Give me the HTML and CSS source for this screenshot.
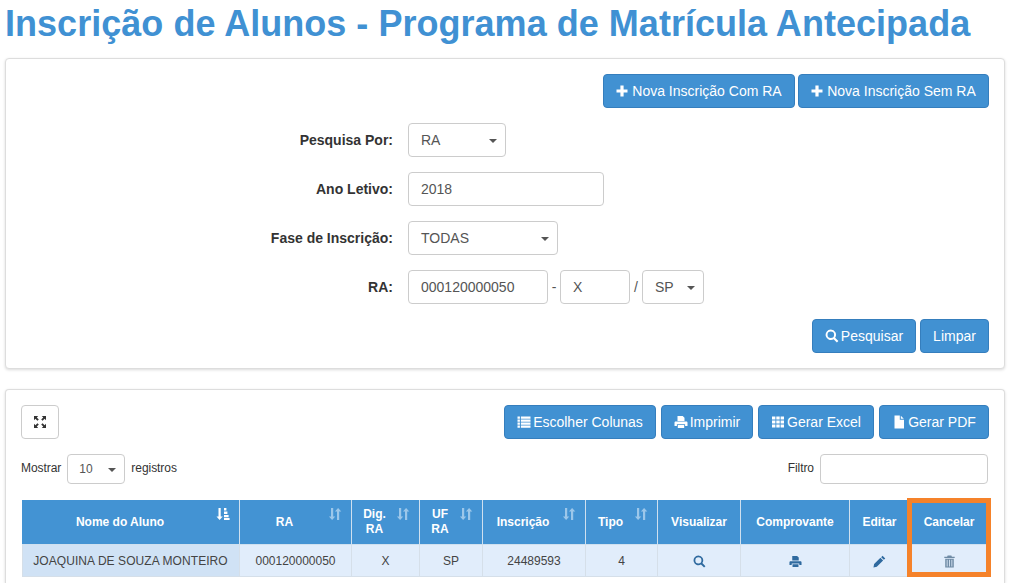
FILE: index.html
```html
<!DOCTYPE html>
<html lang="pt-BR">
  <head>
    <meta charset="UTF-8" />
    <title>Inscrição de Alunos</title>
    <link rel="stylesheet" href="styles.css">
  </head>
  <body>
    <svg class="sprite" xmlns="http://www.w3.org/2000/svg">
      <symbol id="i-plus" viewBox="0 0 12 12"><path d="M4.4 0.5h3.2v3.9h3.9v3.2H7.6v3.9H4.4V7.6H0.5V4.4h3.9z"/></symbol>
      <symbol id="i-search" viewBox="0 0 14 14"><path fill-rule="evenodd" d="M5.8 0.6a5.2 5.2 0 0 1 4.3 8.1l3.3 3.3-1.5 1.5-3.3-3.3A5.2 5.2 0 1 1 5.8 0.6zm0 1.900a3.300 3.300 0 1 0 0 6.600 3.300 3.300 0 0 0 0-6.600z"/></symbol>
      <symbol id="i-print" viewBox="0 0 14 14"><path fill-rule="evenodd" d="M3.5 1h5.2L10.5 2.8V6h-7zM1.6 6.6h10.8c.6 0 1.1.5 1.1 1.1v3.2h-2.4V9.2H2.9v1.7H.5V7.7c0-.6.5-1.1 1.1-1.1zM3.8 10h6.400v3H3.800z"/></symbol>
      <symbol id="i-list" viewBox="0 0 14 14"><path d="M.5 1.5h2.4v2.2H.5zm3.4 0h9.6v2.2H3.9zM.5 4.5h2.4v2.2H.5zm3.4 0h9.6v2.2H3.9zM.5 7.5h2.4v2.2H.5zm3.4 0h9.6v2.2H3.9zM.5 10.5h2.4v2.2H.5zm3.4 0h9.6v2.2H3.9z"/></symbol>
      <symbol id="i-th" viewBox="0 0 14 14"><path d="M1 1.5h3.4v3H1zm4.3 0h3.4v3H5.3zm4.3 0H13v3H9.600zM1 5.500h3.400v3H1zm4.300 0h3.400v3H5.300zm4.300 0H13v3H9.600zM1 9.500h3.400v3H1zm4.300 0h3.400v3H5.300zm4.300 0H13v3H9.600z"/></symbol>
      <symbol id="i-file" viewBox="0 0 14 14"><path d="M2.500 .5h5.300v4.200H12v8.800H2.500zM8.800 .7 11.800 3.700H8.800z"/></symbol>
      <symbol id="i-full" viewBox="0 0 14 14"><path d="M1 1h4.200L3.800 2.400 5.800 4.400 4.400 5.800 2.400 3.800 1 5.200zM13 1v4.200L11.600 3.800 9.600 5.800 8.200 4.400 10.200 2.400 8.800 1zM1 13V8.800L2.400 10.200 4.400 8.200 5.800 9.600 3.800 11.600 5.200 13zM13 13H8.800L10.200 11.600 8.200 9.600 9.600 8.200 11.600 10.200 13 8.800z"/></symbol>
      <symbol id="i-sort" viewBox="0 0 14 14"><path d="M3 1h2.200v8.500H7.300L4.100 13 .9 9.500H3zM9 13h2.200V4.500h2.100L10.100 1 6.900 4.500H9z"/></symbol>
      <symbol id="i-sorted" viewBox="0 0 14 14"><path d="M2.500 1h2.200v8.500h2L3.600 13 .5 9.500h2zM8 1h2.400v2.400H8zM8 4.500h3.400v2.400H8zM8 8h4.600v2.200H8zM8 11h5.600v2H8z"/></symbol>
      <symbol id="i-pencil" viewBox="0 0 14 14"><path d="M10.300 .8l2.900 2.900-1.500 1.500-2.900-2.900zM8 3l2.900 2.900-6.800 6.800-3.600.8.700-3.700z"/></symbol>
      <symbol id="i-trash" viewBox="0 0 14 14"><path fill-rule="evenodd" d="M5 .5h4l.6 1.300h3v1.400H1.400V1.800h3zM2.400 4h9.200v9.500H2.400zM4 5.200v7.100h.9V5.200zm2.500 0v7.100h.9V5.200zm2.600 0v7.100h.9V5.200z"/></symbol>
    </svg>

    <h1 class="page_title">Inscrição de Alunos - Programa de Matrícula Antecipada</h1>

    <div class="panel panel_search">
      <div class="btn_row">
        <button class="btn btn_new_com"><svg class="icon icon_plus"><use href="#i-plus"/></svg>Nova Inscrição Com RA</button>
        <button class="btn btn_new_sem"><svg class="icon icon_plus"><use href="#i-plus"/></svg>Nova Inscrição Sem RA</button>
      </div>

      <div class="form_row">
        <label class="form_label">Pesquisa Por:</label>
        <div class="control picker w_98">RA<span class="caret"></span></div>
      </div>
      <div class="form_row">
        <label class="form_label">Ano Letivo:</label>
        <div class="control w_196">2018</div>
      </div>
      <div class="form_row">
        <label class="form_label">Fase de Inscrição:</label>
        <div class="control picker w_150">TODAS<span class="caret"></span></div>
      </div>
      <div class="form_row">
        <label class="form_label">RA:</label>
        <div class="control w_140">000120000050</div>
        <span class="sep">-</span>
        <div class="control w_70">X</div>
        <span class="sep">/</span>
        <div class="control picker w_62">SP<span class="caret"></span></div>
      </div>

      <div class="btn_row search_actions">
        <button class="btn btn_search"><svg class="icon"><use href="#i-search"/></svg>Pesquisar</button>
        <button class="btn btn_clear">Limpar</button>
      </div>
    </div>

    <div class="panel panel_result">
      <div class="tools">
        <button class="btn_full"><svg class="icon_full"><use href="#i-full"/></svg></button>
        <div class="tool_buttons">
          <button class="btn btn_cols"><svg class="icon"><use href="#i-list"/></svg>Escolher Colunas</button>
          <button class="btn btn_print"><svg class="icon"><use href="#i-print"/></svg>Imprimir</button>
          <button class="btn btn_excel"><svg class="icon"><use href="#i-th"/></svg>Gerar Excel</button>
          <button class="btn btn_pdf"><svg class="icon"><use href="#i-file"/></svg>Gerar PDF</button>
        </div>
      </div>

      <div class="list_options">
        <span>Mostrar</span>
        <div class="control picker small_picker">10<span class="caret"></span></div>
        <span>registros</span>
        <span class="filter_label">Filtro</span>
        <div class="control filter_input"></div>
      </div>

      <div class="table_wrap">
        <table class="grid">
          <colgroup>
            <col class="c_nome"><col class="c_ra"><col class="c_dig"><col class="c_uf"><col class="c_insc">
            <col class="c_tipo"><col class="c_vis"><col class="c_comp"><col class="c_edit"><col class="c_canc">
          </colgroup>
          <thead>
            <tr>
              <th class="th_sort">Nome do Aluno<svg class="sort sorted"><use href="#i-sorted"/></svg></th>
              <th class="th_sort">RA<svg class="sort"><use href="#i-sort"/></svg></th>
              <th class="th_sort">Dig.<br>RA<svg class="sort"><use href="#i-sort"/></svg></th>
              <th class="th_sort">UF<br>RA<svg class="sort"><use href="#i-sort"/></svg></th>
              <th class="th_sort">Inscrição<svg class="sort"><use href="#i-sort"/></svg></th>
              <th class="th_sort">Tipo<svg class="sort"><use href="#i-sort"/></svg></th>
              <th>Visualizar</th>
              <th>Comprovante</th>
              <th>Editar</th>
              <th>Cancelar</th>
            </tr>
          </thead>
          <tbody>
            <tr>
              <td class="td_sorted">JOAQUINA DE SOUZA MONTEIRO</td>
              <td>000120000050</td>
              <td>X</td>
              <td>SP</td>
              <td>24489593</td>
              <td>4</td>
              <td><svg class="row_icon"><use href="#i-search"/></svg></td>
              <td><svg class="row_icon"><use href="#i-print"/></svg></td>
              <td><svg class="row_icon"><use href="#i-pencil"/></svg></td>
              <td><svg class="row_icon icon_trash"><use href="#i-trash"/></svg></td>
            </tr>
          </tbody>
        </table>
        <div class="highlight"></div>
      </div>
    </div>
  </body>
</html>
```

FILE: styles.css
```css
* {
  margin: 0;
  padding: 0;
  box-sizing: border-box;
}
html,
body {
  height: 583px;
  overflow: hidden;
}
body {
  padding: 0 5px;
  background-color: white;
  color: #333;
  font-family: "Liberation Sans", Arial, sans-serif;
  font-size: 14px;
}
.sprite {
  display: none;
}
.page_title {
  height: 58px;
  color: #4091d3;
  font-size: 36px;
  line-height: 48px;
  font-weight: bold;
  letter-spacing: 0.03px;
  white-space: nowrap;
}
.panel {
  background-color: white;
  border: 1px solid #ddd;
  border-radius: 4px;
  box-shadow: 0 1px 3px rgba(0, 0, 0, 0.15);
}
.panel_search {
  height: 311px;
  padding: 15px 15px 0 0;
}
.panel_result {
  height: 194px;
  margin-top: 20px;
  padding: 15px 15px 0;
  border-bottom: 0;
  border-radius: 4px 4px 0 0;
}
.btn_row {
  display: flex;
  justify-content: flex-end;
  gap: 3px;
}
.btn {
  display: flex;
  align-items: center;
  justify-content: center;
  height: 34px;
  background-color: #4191d2;
  border: 1px solid #357ebd;
  border-radius: 4px;
  color: white;
  font-family: inherit;
  font-size: 14px;
  white-space: nowrap;
}
.icon {
  width: 14px;
  height: 14px;
  margin-right: 2px;
  fill: white;
}
.icon_plus {
  width: 12px;
  height: 12px;
  margin-right: 4px;
}
.btn_new_com {
  width: 192px;
}
.btn_new_sem {
  width: 191px;
}
.form_row {
  display: flex;
  align-items: center;
  height: 34px;
  margin-top: 15px;
  color: #555;
}
.form_label {
  width: 387px;
  margin-right: 15px;
  color: #333;
  font-weight: bold;
  text-align: right;
}
.control {
  position: relative;
  height: 34px;
  padding: 0 12px;
  background-color: white;
  border: 1px solid #ccc;
  border-radius: 4px;
  color: #555;
  line-height: 32px;
}
.caret {
  position: absolute;
  top: 15px;
  right: 8px;
  border-top: 4px solid #555;
  border-left: 4px solid transparent;
  border-right: 4px solid transparent;
}
.w_98 {
  width: 98px;
}
.w_196 {
  width: 196px;
}
.w_150 {
  width: 150px;
}
.w_140 {
  width: 140px;
}
.w_70 {
  width: 70px;
}
.w_62 {
  width: 62px;
}
.sep {
  width: 12px;
  text-align: center;
}
.search_actions {
  gap: 4px;
  margin-top: 15px;
}
.btn_search {
  width: 104px;
}
.btn_clear {
  width: 69px;
}
.tools {
  display: flex;
  justify-content: space-between;
}
.btn_full {
  width: 38px;
  height: 34px;
  background-color: white;
  border: 1px solid #ccc;
  border-radius: 4px;
}
.icon_full {
  display: block;
  width: 14px;
  height: 14px;
  margin: 0 auto;
  fill: #333;
}
.tool_buttons {
  display: flex;
  gap: 5px;
}
.btn_cols {
  width: 152px;
}
.btn_print {
  width: 92px;
}
.btn_excel {
  width: 116px;
}
.btn_pdf {
  width: 110px;
}
.list_options {
  display: flex;
  align-items: center;
  height: 30px;
  margin-top: 15px;
  padding-right: 1px;
  font-size: 12px;
  letter-spacing: -0.05px;
}
.list_options > span {
  padding-bottom: 2px;
}
.small_picker {
  width: 58px;
  height: 30px;
  margin: 0 6px;
  padding: 0 11px;
  font-size: 12px;
  line-height: 28px;
}
.small_picker .caret {
  top: 13px;
}
.list_options > .filter_label {
  margin-left: auto;
  margin-right: 6px;
}
.filter_input {
  width: 168px;
  height: 30px;
}
.table_wrap {
  position: relative;
  margin-top: 16px;
  margin-left: 1px;
}
.grid {
  width: 966px;
  table-layout: fixed;
  border-collapse: collapse;
  font-size: 12px;
}
.c_nome {
  width: 217px;
}
.c_ra {
  width: 112px;
}
.c_dig {
  width: 68px;
}
.c_uf {
  width: 63px;
}
.c_insc {
  width: 103px;
}
.c_tipo {
  width: 72px;
}
.c_vis {
  width: 83px;
}
.c_comp {
  width: 109px;
}
.c_edit {
  width: 60px;
}
.c_canc {
  width: 79px;
}
.grid th {
  position: relative;
  height: 44px;
  padding-bottom: 1px;
  background-color: #4393d3;
  border: 1px solid #cfe0ef;
  border-top-color: #4393d3;
  color: white;
  font-weight: bold;
  line-height: 15px;
  text-align: center;
}
.grid th:first-child {
  border-left-color: #4393d3;
}
.grid th:last-child {
  border-right-color: #4393d3;
}
.grid th.th_sort {
  padding-right: 22px;
}
.sort {
  position: absolute;
  top: 6px;
  right: 9px;
  width: 14px;
  height: 14px;
  fill: #9cc7ea;
}
.sorted {
  fill: white;
}
.grid td {
  height: 32px;
  background-color: #e1edfb;
  border: 1px solid #d5dfe9;
  color: #444;
  text-align: center;
}
.grid td.td_sorted {
  background-color: #d0e2f5;
  padding-right: 1px;
  letter-spacing: 0.07px;
}
.row_icon {
  display: block;
  width: 13px;
  height: 13px;
  margin: 1px auto 0;
  fill: #2f6a9f;
}
.icon_trash {
  fill: #6f8ba5;
}
.highlight {
  position: absolute;
  top: -2px;
  left: 885px;
  width: 84px;
  height: 79px;
  border: 5px solid #f5822a;
}
```
